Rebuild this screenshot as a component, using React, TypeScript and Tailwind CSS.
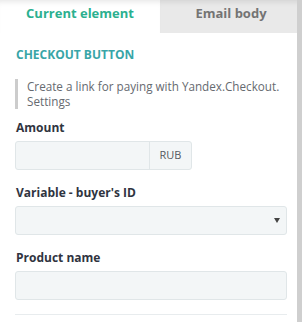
import React from "react";

const font = { fontFamily: '"Open Sans", "Liberation Sans", sans-serif' };

function Label({ children }: { children: React.ReactNode }) {
  return (
    <div className="text-[12px] leading-[18px] font-bold text-[#30343f] mb-[4px]">{children}</div>
  );
}

export default function App() {
  return (
    <div style={font} className="relative w-[302px] h-[322px] bg-white overflow-hidden">
      <div className="flex h-[33px]">
        <div className="w-[160px] bg-white shadow-[inset_0_6px_6px_-5px_rgba(0,0,0,0.12)] flex justify-center pt-[4px] text-[13px] leading-[18px] font-bold text-[#2bb08f]">
          Current element
        </div>
        <div className="flex-1 bg-[#e9e9e9] shadow-[inset_0_6px_6px_-5px_rgba(0,0,0,0.12)] flex justify-center pt-[4px] text-[13px] leading-[18px] font-bold text-[#747474]">
          Email body
        </div>
      </div>

      <div className="px-[15px]">
        <div className="mt-[13px] pl-[1px] text-[12px] leading-[18px] font-bold text-[#38a5a7]">CHECKOUT BUTTON</div>

        <div className="mt-[15px] border-l-[3px] border-[#cccccc] pl-[9px] text-[11.7px] leading-[15px] text-[#666a70]">
          Create a link for paying with Yandex.Checkout. Settings
        </div>

        <div className="mt-[10px] pl-[1px]">
          <Label>Amount</Label>
        </div>
        <div className="flex w-[177px] h-[29px] border border-[#e0e6e8] rounded-[3px] bg-[#f3f6f7]">
          <div className="flex-1" />
          <div className="w-[42px] border-l border-[#e0e6e8] flex items-center justify-center text-[11px] text-[#555a60]">
            RUB
          </div>
        </div>

        <div className="mt-[14px] pl-[1px]">
          <Label>Variable - buyer's ID</Label>
        </div>
        <div className="flex items-center justify-end h-[29px] border border-[#e0e6e8] rounded-[3px] bg-[#f3f6f7] pr-[6px]">
          <svg width="6" height="5" viewBox="0 0 6 5">
            <path d="M0 0 H6 L3 5 Z" fill="#444" />
          </svg>
        </div>

        <div className="mt-[14px] pl-[1px]">
          <Label>Product name</Label>
        </div>
        <div className="h-[29px] border border-[#e0e6e8] rounded-[3px] bg-[#f3f6f7]" />

        <div className="mt-[14px] h-px bg-[#e8ecee]" />
      </div>

      <div className="absolute right-0 top-0 bottom-0 w-[5px] bg-[#cfcfcf]" />
    </div>
  );
}
